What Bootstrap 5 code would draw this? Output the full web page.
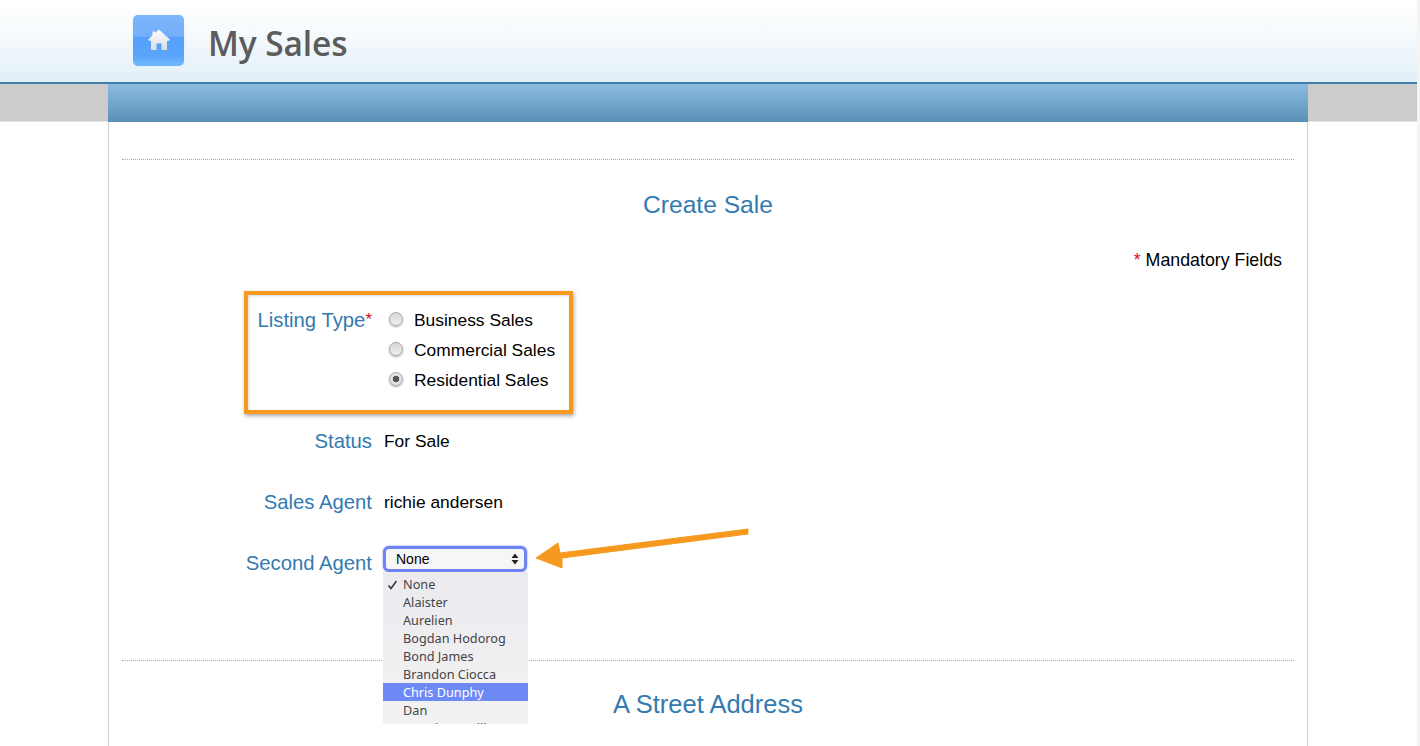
<!DOCTYPE html>
<html lang="en">
<head>
<meta charset="utf-8">
<title>My Sales</title>
<link href="https://cdn.jsdelivr.net/npm/bootstrap@5.3.0/dist/css/bootstrap.min.css" rel="stylesheet">
<style>
html,body{height:746px;overflow:hidden}
body{background:#f4f4f4;font-family:"Liberation Sans",Arial,sans-serif;color:#000;font-size:17.4px;padding-right:3px}
.pg{position:relative;height:746px;background:#fff;width:1417px}
.hdr{height:84px;background:linear-gradient(#fff 0,#f8fbfd 35%,#e2eff8 98%);border-bottom:2px solid #3f7fa9;padding-left:133px;gap:24px}
.logo-box{width:51px;height:51px;border-radius:5px;margin-top:-2px;background:linear-gradient(#7fb6fb 0,#72aefb 42%,#55a0fb 43%,#5aa5fb 80%,#74b8fc 100%);box-shadow:0 0 1px #b5d4f5}
.brand{font-family:"Open Sans","Noto Sans",sans-serif;font-weight:600;font-size:33.5px;color:#5c5c5c;line-height:1;letter-spacing:-.1px;margin-top:5px}
.band{height:38px;background:#ccc;border-bottom:1px solid #e6e6e6}
.band-in{width:1200px;height:38px;margin-left:108px;background:linear-gradient(#8cbde0,#5a90b7)}
.wrap{width:1200px;margin-left:108px;height:624px;border-left:1px solid #ccc;border-right:1px solid #ccc;padding:37px 13px 0}
.rule{border-top:1px dotted #aaa;height:0}
.ttl{color:#337ab0;font-size:24.6px;line-height:28px;text-align:center;margin:0;font-weight:400}
.ttl-b{padding-top:31px}
.ttl-a{padding-top:29px;font-size:25.5px}
.mand{text-align:right;padding:31px 12px 0 0;line-height:20px;height:88px;font-size:17.8px}
.star{color:#c8102e}
.lbl .star{font-size:17px;vertical-align:2px}
.frow{display:flex;gap:12px;line-height:20px}
.f-list{height:124px;padding-top:3px}
.f-std{height:61px}
.f-sel{height:107px}
.lbl{width:250px;text-align:right;color:#337ab0;font-size:20.3px;flex:none;line-height:20px}
.r-row{height:30px;display:flex;align-items:flex-start;gap:11px;margin-left:5px}
.rad{appearance:none;width:14px;height:14px;border-radius:50%;margin:2px 0 0;flex:none;border:1px solid #aaa;background:linear-gradient(#d6d6d6,#efefef);box-shadow:0 1px 2px #aaa}
.rad:checked{background:radial-gradient(circle,#555 0 3px,#e2e2e2 3.6px)}
.fake-sel{width:144px;height:26px;margin:-7px 0 0 -1px;border:3px solid #6f84f2;border-radius:6px;background:#f6f6f6;font-size:14px;line-height:20px;padding-left:10px;position:relative;box-shadow:0 0 2px #6f84f2}
.updown{position:absolute;right:4px;top:3px}
.menu{position:absolute;left:383px;top:572px;width:145px;height:152px;background:linear-gradient(#ebebef,#f2f2f4);overflow:hidden;padding-top:3px;font-family:"Noto Sans","Open Sans",sans-serif;font-size:12.7px;color:#444}
.opt{height:18px;line-height:18px;padding-left:20px;position:relative;white-space:nowrap}
.opt.sel{background:#6d89f6;color:#fff}
.tick{position:absolute;left:4px;top:5px}
.box-mark{position:absolute;left:244px;top:291px;width:329px;height:123px;border:4px solid #f7981f;box-shadow:1px 2px 4px rgba(0,0,0,.35),inset 1px 1px 3px rgba(0,0,0,.15);pointer-events:none}
.arrow-mark{position:absolute;left:530px;top:522px}
</style>
</head>
<body>
<div class="pg">
  <header class="hdr d-flex align-items-center">
    <div class="logo-box d-flex align-items-center justify-content-center">
      <svg width="24" height="24" viewBox="0 0 24 24"><defs><linearGradient id="hs" x1="0" y1="0" x2="0" y2="1"><stop offset="0" stop-color="#fff"/><stop offset="1" stop-color="#d9dde0"/></linearGradient></defs><path d="M12 1.500 8 5V3.500H5.500V7.300L1 11.800l1 1H4V22h5.500v-6.500h5V22H20v-9.200h2l1-1z" fill="url(#hs)"/></svg>
    </div>
    <div class="brand">My Sales</div>
  </header>
  <div class="band"><div class="band-in"></div></div>
  <main class="wrap">
    <div class="rule"></div>
    <h2 class="ttl ttl-b">Create Sale</h2>
    <div class="mand"><span class="star">*</span> Mandatory Fields</div>
    <div class="frow f-list">
      <div class="lbl">Listing Type<span class="star">*</span></div>
      <div>
        <div class="r-row"><input class="rad" type="radio" name="lt"><span>Business Sales</span></div>
        <div class="r-row"><input class="rad" type="radio" name="lt"><span>Commercial Sales</span></div>
        <div class="r-row"><input class="rad" type="radio" name="lt" checked><span>Residential Sales</span></div>
      </div>
    </div>
    <div class="frow f-std"><div class="lbl">Status</div><div>For Sale</div></div>
    <div class="frow f-std"><div class="lbl">Sales Agent</div><div>richie andersen</div></div>
    <div class="frow f-sel">
      <div class="lbl">Second Agent</div>
      <div class="fake-sel">None
        <svg class="updown" width="10" height="14" viewBox="0 0 10 14"><path d="M5 1.500 8.500 6h-7zM5 12.500 1.500 8h7z" fill="#222"/></svg>
      </div>
    </div>
    <div class="rule"></div>
    <h2 class="ttl ttl-a">A Street Address</h2>
  </main>
  <div class="menu">
    <div class="opt"><svg class="tick" width="11" height="10" viewBox="0 0 11 10"><path d="M1.500 5.500 4 8.500 9.500 1" fill="none" stroke="#333" stroke-width="1.500"/></svg>None</div>
    <div class="opt">Alaister</div>
    <div class="opt">Aurelien</div>
    <div class="opt">Bogdan Hodorog</div>
    <div class="opt">Bond James</div>
    <div class="opt">Brandon Ciocca</div>
    <div class="opt sel">Chris Dunphy</div>
    <div class="opt">Dan</div>
    <div class="opt">Dennis Gorelik</div>
  </div>
  <div class="box-mark"></div>
  <svg class="arrow-mark" width="225" height="52" viewBox="0 0 225 52"><path d="M6 36 28 21 30 31 218 7 218 12 32 36 32 46z" fill="#f7981f" stroke="#f7981f" stroke-linejoin="round"/></svg>
</div>
</body>
</html>
